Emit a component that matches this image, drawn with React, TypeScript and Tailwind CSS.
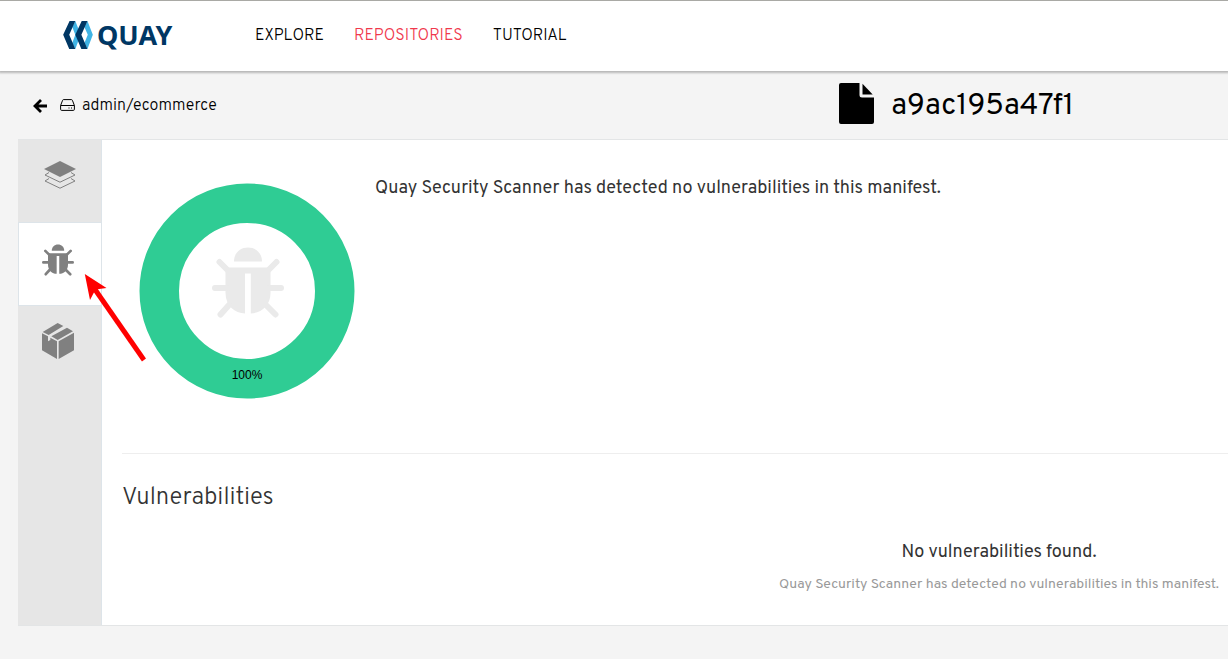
import type { ReactNode } from 'react';

const links = [
  { label: 'EXPLORE', active: false },
  { label: 'REPOSITORIES', active: true },
  { label: 'TUTORIAL', active: false },
];

function QuayMark() {
  return (
    <svg viewBox="0 0 88 83" className="h-7 w-[30px]" aria-hidden="true">
      <path fill="#40b4e5" d="M36 0 52 41 36 83 27 65 36 41 27 18zM72 0 88 41 72 83 63 65 73 41 63 18z" />
      <path fill="#003764" d="M19 0H36L18 41 36 83H18L0 41zM55 0H72L54 41 72 83H54L36 41z" />
    </svg>
  );
}

function LayersIcon() {
  return (
    <svg viewBox="0 0 32 28" className="h-7 w-8" fill="none" stroke="#808080" aria-hidden="true">
      <path d="M16 0 32 8 16 16 0 8z" fill="#808080" stroke="none" />
      <path d="M5 11.5 1 14 16 21.2 31 14 27 11.5M5 17.5 1 20 16 27.2 31 20 27 17.5" />
    </svg>
  );
}

function BugIcon({ className }: { className: string }) {
  return (
    <svg viewBox="0 0 72 71" className={className} fill="currentColor" aria-hidden="true">
      <path d="M22 14.5C22 6 28 .5 36 .5S50 6 50 14.5z" />
      <path d="M13.5 20.5H58.5V46C58.5 59 49 66 38.8 66.5V26.5H33V66.5C23 66 13.5 59 13.5 46z" />
      <path
        d="M7.5 15 16 23.5M64.5 15 56 23.5M3 41H15M57 41H69M17 58 8.500 67.500M54 58 63.500 67.500"
        fill="none"
        stroke="currentColor"
        strokeWidth="6"
        strokeLinecap="round"
      />
    </svg>
  );
}

function PackageIcon() {
  return (
    <svg viewBox="0 0 96 108" className="h-9 w-8" fill="#808080" aria-hidden="true">
      <path d="M47 0 64 9 20 36 2 27zM75 14 93 25 47 51 28 40z" />
      <path d="M0 31 18 40V55L25 51V44L45 55V108L0 82zM50 55 96 29V82L50 108z" />
    </svg>
  );
}

function Tab({ label, active, children }: { label: string; active?: boolean; children: ReactNode }) {
  return (
    <button
      type="button"
      role="tab"
      aria-selected={!!active}
      aria-label={label}
      className={
        active
          ? 'flex h-[84px] w-full items-center justify-center border-y border-l border-[#dde4e9] bg-white pr-1 pb-2 text-[#808080]'
          : 'flex h-[82px] w-full items-center justify-center pb-3 text-[#808080]'
      }
    >
      {children}
    </button>
  );
}

export default function App() {
  return (
    <div className="relative min-h-screen overflow-x-hidden bg-[#f4f4f4] font-['Overpass','Roboto',sans-serif] text-[#333]">
      <header className="relative flex h-[71px] items-center border-t border-[#a9a9a5] bg-white pb-0.5 pl-[63px] shadow-[0_1px_2px_1px_rgba(0,0,0,0.25)]">
        <a href="#home" aria-label="Quay home" className="flex w-[192px] items-center gap-1">
          <QuayMark />
          <span className="font-['Noto_Sans',sans-serif] text-[27px] leading-7 font-bold text-[#003764]">QUAY</span>
        </a>
        <nav className="flex gap-[30px] pt-0.5 text-base leading-5 font-light">
          {links.map((link) => (
            <a key={link.label} href="#nav" className={link.active ? 'text-[#f0384c]' : 'text-black'}>
              {link.label}
            </a>
          ))}
        </nav>
      </header>

      <div className="flex h-[68px] items-center justify-between pr-[154px] pl-[33px] text-black">
        <div className="flex items-center">
          <a href="#back" aria-label="Back" className="pt-0.5">
            <svg viewBox="0 0 14 14" className="h-3.5 w-3.5" fill="none" stroke="currentColor" strokeWidth="2.8" aria-hidden="true">
              <path d="M8 1 2 7 8 13M2.500 7H14" />
            </svg>
          </a>
          <a href="#repository" className="ml-[13px] flex items-center gap-[7px] text-base leading-5 font-light">
            <svg viewBox="0 0 15 12" className="h-3 w-[15px]" fill="none" stroke="currentColor" aria-hidden="true">
              <path d="M.6 6.500 2.600 1.300Q2.800.6 3.600.6H11.400Q12.200.6 12.400 1.300L14.400 6.500V10.300Q14.400 11.400 13.300 11.400H1.700Q.6 11.400.6 10.300zM.6 6.500H14.400" />
              <path d="M8.500 9h1M11 9h1" />
            </svg>
            <span className="pt-0.5">admin/ecommerce</span>
          </a>
        </div>
        <h1 className="flex items-center gap-[17px] pb-1 text-[30px] leading-9">
          <svg viewBox="0 0 35 41" className="h-[41px] w-[35px]" fill="currentColor" aria-hidden="true">
            <path d="M2 0H20.500V12Q20.500 14.500 23 14.500H35V39Q35 41 33 41H2Q0 41 0 39V2Q0 0 2 0z" />
            <path d="M23.500.8 33.700 11.500H23.500z" />
          </svg>
          <span className="pt-2">a9ac195a47f1</span>
        </h1>
      </div>

      <main className="ml-[18px] flex border-y border-[#e3e5e6] bg-white">
        <div role="tablist" aria-orientation="vertical" className="w-[84px] shrink-0 border-r border-[#dde4e9] bg-[#e6e6e6]">
          <Tab label="Layers">
            <LayersIcon />
          </Tab>
          <Tab label="Security scan" active>
            <BugIcon className="h-8 w-8" />
          </Tab>
          <Tab label="Packages">
            <span className="pr-1">
              <PackageIcon />
            </span>
          </Tab>
        </div>

        <div className="min-w-0 flex-1 pb-[30px] pl-5">
          <section className="flex gap-5 border-b border-[#eee] pt-[43px] pb-[54px] pl-[17px]">
            <svg viewBox="0 0 216 216" className="h-[216px] w-[216px] shrink-0" role="img" aria-label="100% passed">
              <circle cx="108" cy="108" r="87.75" fill="none" stroke="#2fcc94" strokeWidth="39.5" />
              <g transform="translate(73 64)">
                <svg width="72" height="71" className="text-[#eaeaea]">
                  <BugIcon className="" />
                </svg>
              </g>
              <text x="108" y="196" textAnchor="middle" className="fill-black font-['Liberation_Sans',sans-serif] text-xs">
                100%
              </text>
            </svg>
            <h2 className="-mt-1.5 text-lg leading-6">
              Quay Security Scanner has detected no vulnerabilities in this manifest.
            </h2>
          </section>

          <section className="pt-[30px]">
            <h3 className="text-2xl leading-7 font-light">Vulnerabilities</h3>
            <div className="mt-[29px] flex justify-end pr-[9px]">
              <div className="text-center">
                <p className="text-lg leading-6">No vulnerabilities found.</p>
                <p className="mt-2.5 text-sm leading-5 text-[#999]">
                  Quay Security Scanner has detected no vulnerabilities in this manifest.
                </p>
              </div>
            </div>
          </section>
        </div>
      </main>

      <svg viewBox="0 0 62 88" className="pointer-events-none absolute top-[274px] left-[84px] h-[88px] w-[62px]" aria-hidden="true">
        <path d="M10 14 60 86" stroke="#f00" strokeWidth="5" />
        <path d="M.8 0 22.500 14 11.500 15.500 6 26z" fill="#f00" />
      </svg>
    </div>
  );
}
